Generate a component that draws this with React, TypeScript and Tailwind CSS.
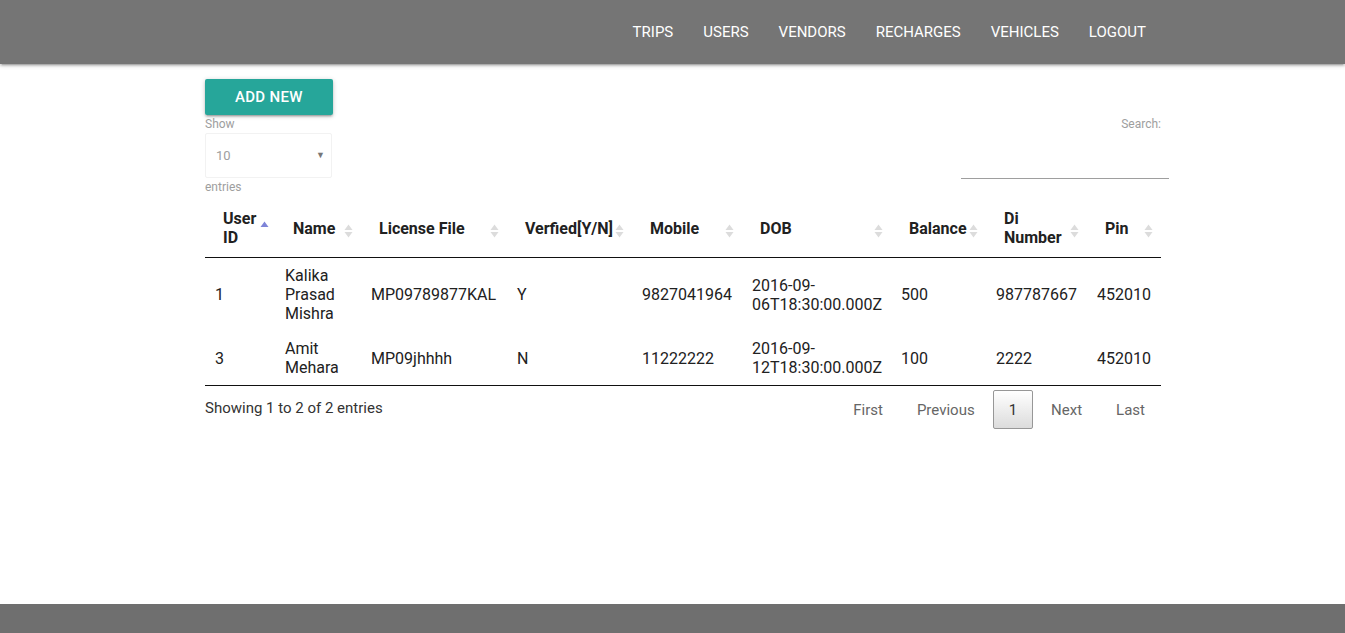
import React from "react";

const navLinks = ["TRIPS", "USERS", "VENDORS", "RECHARGES", "VEHICLES", "LOGOUT"];

const columns = [
  { label: "User ID", width: "w-[70px]", sorted: true },
  { label: "Name", width: "w-[86px]" },
  { label: "License File", width: "w-[146px]" },
  { label: "Verfied[Y/N]", width: "w-[125px]" },
  { label: "Mobile", width: "w-[110px]" },
  { label: "DOB", width: "w-[149px]" },
  { label: "Balance", width: "w-[95px]" },
  { label: "Di Number", width: "w-[101px]" },
  { label: "Pin", width: "w-[74px]" },
];

const rows = [
  ["1", "Kalika Prasad Mishra", "MP09789877KAL", "Y", "9827041964", "2016-09-06T18:30:00.000Z", "500", "987787667", "452010"],
  ["3", "Amit Mehara", "MP09jhhhh", "N", "11222222", "2016-09-12T18:30:00.000Z", "100", "2222", "452010"],
];

// sort arrows like the DataTables images
function SortIcon({ active }: { active?: boolean }) {
  if (active) {
    return (
      <svg width="9" height="14" viewBox="0 0 9 14" className="absolute right-[6px] top-1/2 -translate-y-[10px]">
        <path d="M4.5 0.5 L8.5 6 L0.5 6 Z" fill="#7e84d8" />
      </svg>
    );
  }
  return (
    <svg width="9" height="14" viewBox="0 0 9 14" className="absolute right-[8px] top-1/2 -translate-y-1/2">
      <path d="M4.5 0.5 L8.5 6 L0.5 6 Z" fill="#dcdcdc" />
      <path d="M4.5 13.5 L8.5 8 L0.5 8 Z" fill="#dcdcdc" />
    </svg>
  );
}

export default function App() {
  return (
    <div className="flex flex-col h-[633px] bg-white font-['Roboto',sans-serif] overflow-hidden">
      {/* Navbar */}
      <nav className="h-16 shrink-0 bg-[#757575] shadow-[0_2px_2px_0_rgba(0,0,0,0.14),0_3px_1px_-2px_rgba(0,0,0,0.12),0_1px_5px_0_rgba(0,0,0,0.2)] relative z-10">
        <ul className="ml-[618px] w-[543px] flex justify-end h-full">
          {navLinks.map((link) => (
            <li key={link}>
              <a className="block px-[15px] leading-[64px] text-[15px] text-white">{link}</a>
            </li>
          ))}
        </ul>
      </nav>

      {/* Content */}
      <main className="flex-1">
        <div className="ml-[205px] w-[956px]">
          <div className="flex justify-between items-start pt-[15px]">
            <div className="flex flex-col items-start">
              <button className="h-9 px-[30px] rounded-[2px] bg-[#26a69a] text-white text-[15px] font-medium tracking-[0.3px] shadow-[0_2px_2px_0_rgba(0,0,0,0.14),0_3px_1px_-2px_rgba(0,0,0,0.12),0_1px_5px_0_rgba(0,0,0,0.2)]">
                ADD NEW
              </button>
              <span className="mt-px text-xs leading-[17px] text-[#9e9e9e]">Show</span>
              <div className="w-[127px] h-[45px] border border-[#f2f2f2] rounded-[2px] flex items-center justify-between pl-[10px] pr-[6px]">
                <span className="text-[13px] text-[#9e9e9e]">10</span>
                <span className="text-[9px] text-[#777]">▼</span>
              </div>
              <span className="mt-px text-xs leading-[17px] text-[#9e9e9e]">entries</span>
            </div>
            <div className="flex flex-col items-end pt-[37px]">
              <span className="text-xs leading-[17px] text-[#9e9e9e]">Search:</span>
              <div className="w-[208px] h-[46px] -mr-2 border-b border-[#9e9e9e]" />
            </div>
          </div>

          <table className="mt-[9px] w-full table-fixed border-separate border-spacing-0 text-base text-[#212121]">
            <colgroup>
              {columns.map((c) => (
                <col key={c.label} className={c.width} />
              ))}
            </colgroup>
            <thead>
              <tr>
                {columns.map((c) => (
                  <th
                    key={c.label}
                    className="relative text-left font-bold leading-[19px] pt-[4px] pb-[10px] pl-[18px] pr-[18px] border-b border-[#111]"
                  >
                    {c.label}
                    <SortIcon active={c.sorted} />
                  </th>
                ))}
              </tr>
            </thead>
            <tbody>
              {rows.map((r, i) => (
                <tr key={i}>
                  {r.map((cell, j) => (
                    <td
                      key={j}
                      className={`px-[10px] py-2 leading-[19px] align-middle ${i === rows.length - 1 ? "border-b border-[#111]" : ""}`}
                    >
                      {cell}
                    </td>
                  ))}
                </tr>
              ))}
            </tbody>
          </table>

          <div className="flex justify-between items-start">
            <div className="pt-[12px] text-[15px] leading-[20px] text-[#333]">Showing 1 to 2 of 2 entries</div>
            <div className="flex pt-[4px] text-[15px] text-[#666]">
              {["First", "Previous"].map((p) => (
                <a key={p} className="ml-[2px] px-[15px] pt-[8px] pb-[6px] leading-[23px] border border-transparent">{p}</a>
              ))}
              <a className="ml-[2px] px-[15px] pt-[8px] pb-[6px] leading-[23px] border border-[#979797] rounded-[2px] text-[#333] bg-gradient-to-b from-white to-[#dcdcdc]">
                1
              </a>
              {["Next", "Last"].map((p) => (
                <a key={p} className="ml-[2px] px-[15px] pt-[8px] pb-[6px] leading-[23px] border border-transparent">{p}</a>
              ))}
            </div>
          </div>
        </div>
      </main>

      {/* Footer */}
      <footer className="h-[29px] shrink-0 bg-[#6f6f6f]" />
    </div>
  );
}
